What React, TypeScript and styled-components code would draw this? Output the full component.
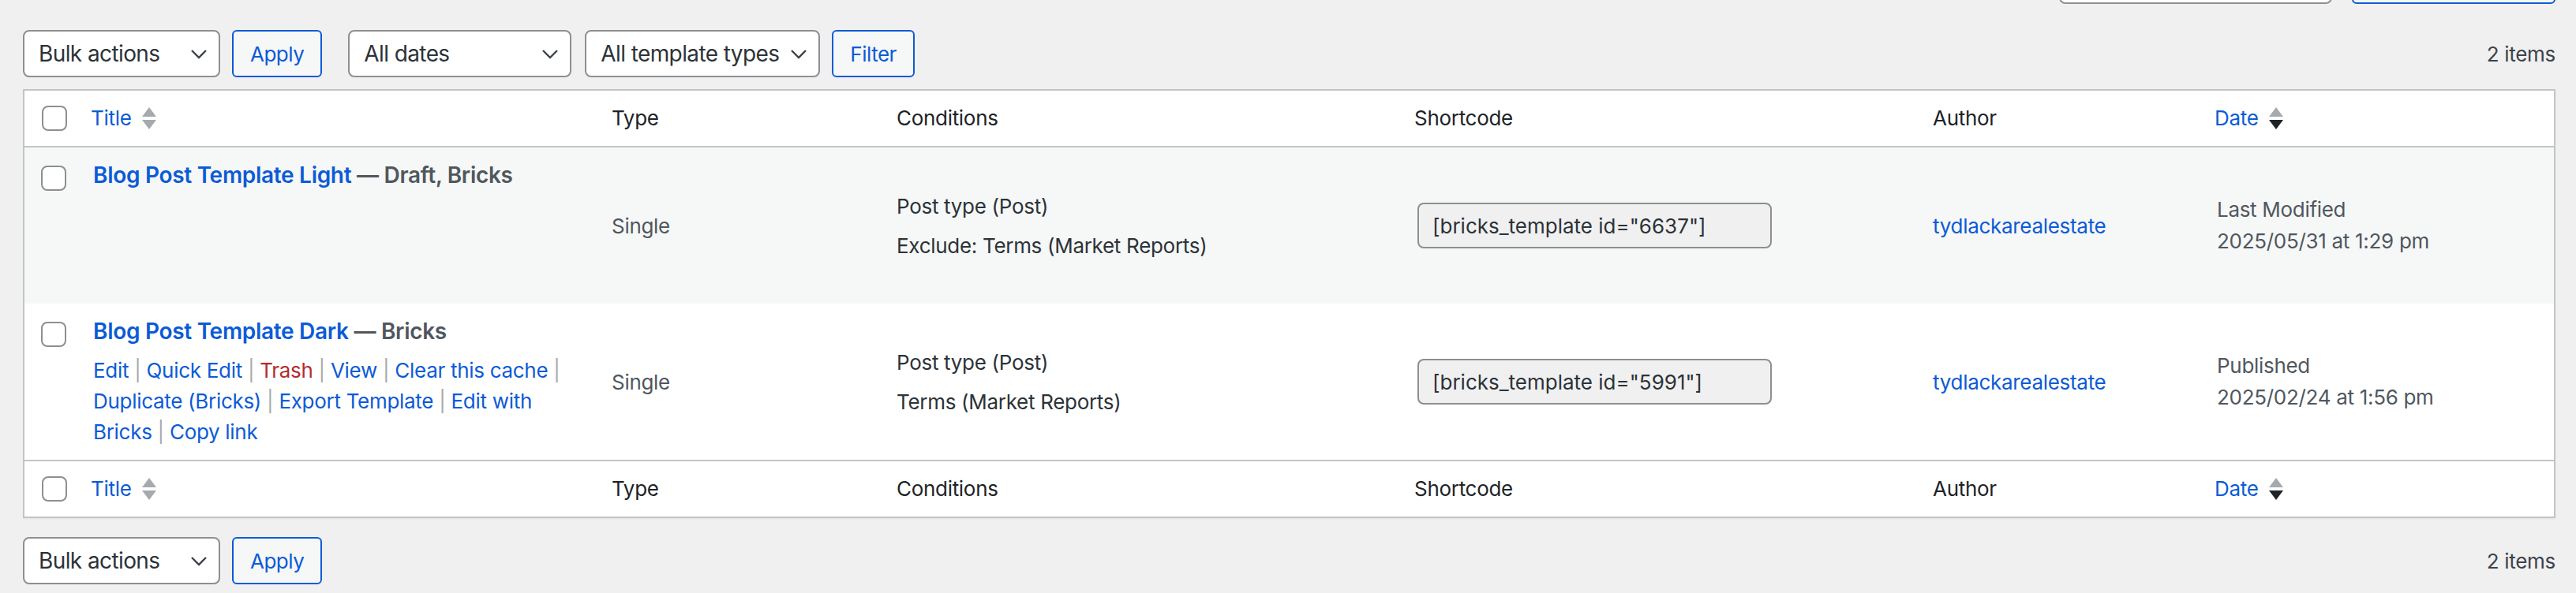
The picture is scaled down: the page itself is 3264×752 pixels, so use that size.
import styled, { createGlobalStyle } from "styled-components";

const BLUE = "#0b5bd7";

const GlobalStyle = createGlobalStyle`
  html, body {
    margin: 0;
    padding: 0;
    background: #f0f0f1;
  }
  body {
    font-family: Inter, "Noto Sans", "Liberation Sans", sans-serif;
    font-size: 26px;
    letter-spacing: -0.3px;
    color: #3c434a;
    overflow: hidden;
  }
  * {
    box-sizing: border-box;
  }
`;

interface Template {
  readonly id: string;
  readonly title: string;
  readonly state: string;
  readonly type: string;
  readonly conditions: Array<string>;
  readonly author: string;
  readonly dateLabel: string;
  readonly date: string;
  readonly showActions: boolean;
  readonly striped: boolean;
}

const templates: Array<Template> = [
  {
    id: "6637",
    title: "Blog Post Template Light",
    state: "Draft, Bricks",
    type: "Single",
    conditions: ["Post type (Post)", "Exclude: Terms (Market Reports)"],
    author: "tydlackarealestate",
    dateLabel: "Last Modified",
    date: "2025/05/31 at 1:29 pm",
    showActions: false,
    striped: true,
  },
  {
    id: "5991",
    title: "Blog Post Template Dark",
    state: "Bricks",
    type: "Single",
    conditions: ["Post type (Post)", "Terms (Market Reports)"],
    author: "tydlackarealestate",
    dateLabel: "Published",
    date: "2025/02/24 at 1:56 pm",
    showActions: true,
    striped: false,
  },
];

const rowActions = [
  "Edit",
  "Quick Edit",
  "Trash",
  "View",
  "Clear this cache",
  "Duplicate (Bricks)",
  "Export Template",
  "Edit with Bricks",
  "Copy link",
];

const Chevron = () => (
  <svg width="22" height="13" viewBox="0 0 22 13" fill="none">
    <path d="M2 2 L11 11 L20 2" stroke="#3c434a" strokeWidth="2.4" />
  </svg>
);

const SortIcon = ({ active }: { active?: boolean }) => (
  <svg width="18" height="28" viewBox="0 0 18 28">
    <path d="M0 12 L9 0 L18 12 Z" fill="#a7aaad" />
    <path d="M0 16 L18 16 L9 28 Z" fill={active ? "#1d2327" : "#a7aaad"} />
  </svg>
);

const TableNavBar = ({ top }: { top?: boolean }) => (
  <TableNav $marginTop={top ? 33 : 24}>
    <SelectBox $width={250}>
      Bulk actions
      <Chevron />
    </SelectBox>
    <Button $marginLeft={15}>Apply</Button>
    {top && (
      <>
        <SelectBox $width={283} $marginLeft={33}>
          All dates
          <Chevron />
        </SelectBox>
        <SelectBox $width={298} $marginLeft={17}>
          All template types
          <Chevron />
        </SelectBox>
        <Button $marginLeft={15}>Filter</Button>
      </>
    )}
    <ItemCount>2 items</ItemCount>
  </TableNav>
);

const HeaderRow = ({ foot }: { foot?: boolean }) => (
  <tr>
    <HeadCell $foot={foot} $padLeft={22}>
      <Checkbox />
    </HeadCell>
    <HeadCell $foot={foot} $padLeft={17}>
      <SortLink>
        Title
        <SortIcon />
      </SortLink>
    </HeadCell>
    <HeadCell $foot={foot}>Type</HeadCell>
    <HeadCell $foot={foot}>Conditions</HeadCell>
    <HeadCell $foot={foot} $padLeft={16}>Shortcode</HeadCell>
    <HeadCell $foot={foot}>Author</HeadCell>
    <HeadCell $foot={foot} $padLeft={17}>
      <SortLink>
        Date
        <SortIcon active />
      </SortLink>
    </HeadCell>
  </tr>
);

const wordsOf = (label: string) =>
  label.split(" ").map((word, index) => (index ? ` ${word}` : word));

export default function App() {
  return (
    <>
      <GlobalStyle />
      <Page>
        <SearchBox>
          <SearchInput />
          <SearchButton />
        </SearchBox>
        <TableNavBar top />
        <ListTable>
          <colgroup>
            <col style={{ width: 67 }} />
            <col style={{ width: 657 }} />
            <col style={{ width: 361 }} />
            <col style={{ width: 660 }} />
            <col style={{ width: 653 }} />
            <col style={{ width: 360 }} />
            <col />
          </colgroup>
          <thead>
            <HeaderRow />
          </thead>
          <tbody>
            {templates.map((item) => (
              <BodyRow key={item.id} $striped={item.striped}>
                <CheckCell>
                  <Checkbox />
                </CheckCell>
                <TitleCell>
                  <RowTitle>
                    <TitleLink>{item.title}</TitleLink> — {item.state}
                  </RowTitle>
                  {item.showActions ? (
                    <RowActions>
                      {rowActions.map((action, index) => (
                        <span key={action}>
                          <ActionLink $danger={action === "Trash"}>{wordsOf(action)}</ActionLink>
                          {index < rowActions.length - 1 && <Separator> | </Separator>}
                        </span>
                      ))}
                    </RowActions>
                  ) : (
                    <ActionsSpacer />
                  )}
                </TitleCell>
                <Cell>{item.type}</Cell>
                <Cell $dark>
                  <ConditionList>
                    {item.conditions.map((condition) => (
                      <li key={condition}>{condition}</li>
                    ))}
                  </ConditionList>
                </Cell>
                <Cell>
                  <ShortcodeField>[bricks_template id="{item.id}"]</ShortcodeField>
                </Cell>
                <Cell>
                  <AuthorLink>{item.author}</AuthorLink>
                </Cell>
                <DateCell>
                  {item.dateLabel}
                  <br />
                  {item.date}
                </DateCell>
              </BodyRow>
            ))}
          </tbody>
          <tfoot>
            <HeaderRow foot />
          </tfoot>
        </ListTable>
        <TableNavBar />
      </Page>
    </>
  );
}

const Page = styled.div`
  padding: 0 26px 0 29px;
`;

const SearchBox = styled.div`
  display: flex;
  justify-content: flex-end;
  gap: 25px;
  height: 60px;
  margin-top: -55px;
`;

const SearchInput = styled.div`
  width: 346px;
  border: 2px solid #8c8f94;
  border-radius: 8px;
  background: #fff;
`;

const SearchButton = styled.div`
  width: 258px;
  border: 2px solid ${BLUE};
  border-radius: 6px;
  background: #f6f7f7;
`;

const TableNav = styled.div<{ $marginTop: number }>`
  display: flex;
  align-items: center;
  height: 60px;
  margin-top: ${(p) => p.$marginTop}px;
`;

const SelectBox = styled.div<{ $width: number; $marginLeft?: number }>`
  display: flex;
  align-items: center;
  justify-content: space-between;
  width: ${(p) => p.$width}px;
  height: 60px;
  margin-left: ${(p) => p.$marginLeft ?? 0}px;
  padding: 0 14px 0 18px;
  border: 2px solid #8c8f94;
  border-radius: 8px;
  background: #fff;
  color: #2c3338;
  font-size: 28px;
  letter-spacing: -0.6px;
  white-space: nowrap;
`;

const Button = styled.button<{ $marginLeft?: number }>`
  height: 60px;
  margin-left: ${(p) => p.$marginLeft ?? 0}px;
  padding: 0 21px;
  border: 2px solid ${BLUE};
  border-radius: 6px;
  background: #f6f7f7;
  color: ${BLUE};
  font-family: inherit;
  font-size: 26px;
  letter-spacing: -0.5px;
`;

const ItemCount = styled.span`
  margin-left: auto;
  color: #3c434a;
`;

const ListTable = styled.table`
  width: 100%;
  margin-top: 15px;
  border: 2px solid #c3c4c7;
  border-collapse: separate;
  border-spacing: 0;
  table-layout: fixed;
  background: #fff;
  box-shadow: 0 2px 2px rgba(0, 0, 0, 0.04);
`;

const HeadCell = styled.th<{ $foot?: boolean; $padLeft?: number }>`
  padding: 16px 20px 16px ${(p) => p.$padLeft ?? 20}px;
  ${(p) => (p.$foot ? "border-top" : "border-bottom")}: 2px solid #c3c4c7;
  text-align: left;
  vertical-align: middle;
  font-weight: 400;
  line-height: 38px;
  color: #1d2327;
`;

const SortLink = styled.span`
  display: inline-flex;
  align-items: center;
  gap: 13px;
  color: ${BLUE};
`;

const Checkbox = styled.div`
  width: 32px;
  height: 32px;
  border: 2px solid #8c8f94;
  border-radius: 8px;
  background: #fff;
`;

const BodyRow = styled.tr<{ $striped: boolean }>`
  background: ${(p) => (p.$striped ? "#f6f7f7" : "#fff")};
`;

const CheckCell = styled.td`
  padding: 23px 0 0 21px;
  vertical-align: top;
`;

const TitleCell = styled.td`
  padding: 16px 20px;
  vertical-align: top;
`;

const RowTitle = styled.div`
  font-size: 28px;
  font-weight: 600;
  line-height: 39px;
  color: #50575e;
`;

const TitleLink = styled.span`
  color: ${BLUE};
`;

const RowActions = styled.div`
  margin-top: 10px;
  line-height: 39px;
`;

const ActionsSpacer = styled.div`
  height: 127px;
`;

const ActionLink = styled.span<{ $danger?: boolean }>`
  color: ${(p) => (p.$danger ? "#b32d2e" : BLUE)};
`;

const Separator = styled.span`
  color: #a7aaad;
`;

const Cell = styled.td<{ $dark?: boolean }>`
  padding: 16px 20px;
  vertical-align: middle;
  line-height: 39px;
  color: ${(p) => (p.$dark ? "#2c3338" : "#50575e")};
`;

const ConditionList = styled.ul`
  margin: 0;
  padding: 0;
  list-style: none;

  li + li {
    margin-top: 11px;
  }
`;

const ShortcodeField = styled.div`
  display: flex;
  align-items: center;
  width: 449px;
  height: 58px;
  padding: 0 17px;
  border: 2px solid #8c8f94;
  border-radius: 8px;
  background: #f0f0f1;
  color: #2c3338;
  letter-spacing: 0;
  white-space: nowrap;
`;

const AuthorLink = styled.span`
  color: ${BLUE};
`;

const DateCell = styled.td`
  padding: 16px 20px;
  vertical-align: middle;
  line-height: 40px;
  color: #50575e;
`;
